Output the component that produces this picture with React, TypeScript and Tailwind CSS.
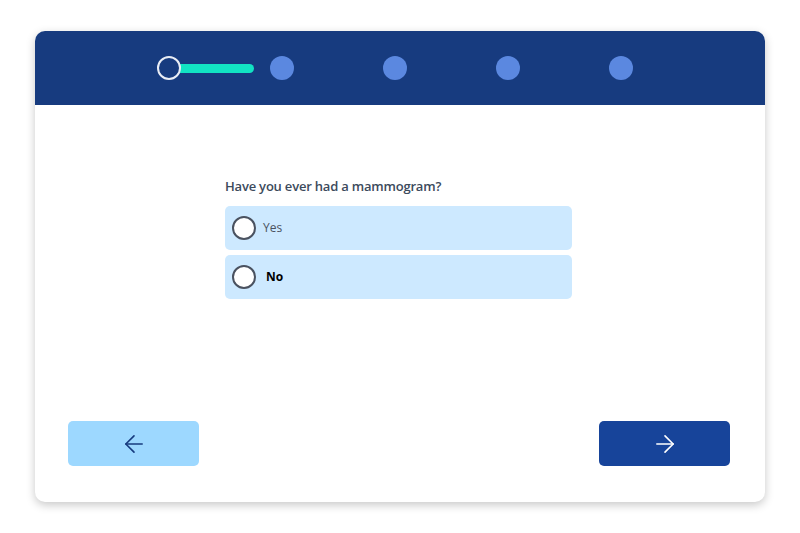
import { ArrowLeft, ArrowRight } from "lucide-react";

const steps = [0, 1, 2, 3, 4];

const options = [
  { id: "yes", label: "Yes", bold: false },
  { id: "no", label: "No", bold: true },
];

const App = () => {
  return (
    <div className="w-[800px] h-[533px] bg-white pt-[31px] pl-[35px]" style={{ fontFamily: '"Open Sans", "Noto Sans", sans-serif' }}>
      <div className="w-[730px] h-[471px] bg-white rounded-[10px] shadow-[0_3px_10px_rgba(0,0,0,0.22)] flex flex-col overflow-hidden">
        {/* progress header */}
        <div className="h-[74px] bg-[#173b7f] flex items-center pl-[122px] shrink-0">
          {steps.map((s) => (
            <div key={s} className="flex items-center">
              {s === 0 ? (
                <div className="w-6 h-6 rounded-full border-2 border-[#e8ecf5] bg-[#173b7f] relative z-10" />
              ) : (
                <div className="w-6 h-6 rounded-full bg-[#5b88e0]" />
              )}
              {s < steps.length - 1 && (
                <div className="w-[89px] flex items-center">
                  {s === 0 && <div className="h-[9px] w-[75px] -ml-[2px] rounded-r-full bg-[#12e3c3]" />}
                </div>
              )}
            </div>
          ))}
        </div>

        {/* question */}
        <div className="flex-1 flex flex-col pl-[190px] pt-[71px]">
          <div className="w-[347px]">
            <h2 className="text-[13px] font-semibold tracking-[-0.2px] text-[#3c4a5c] leading-5 mb-[10px]">Have you ever had a mammogram?</h2>
            <div className="flex flex-col gap-[5px]">
              {options.map((o) => (
                <label key={o.id} className="h-11 rounded-[5px] bg-[#cde9ff] flex items-center pl-[7px] gap-[7px] cursor-pointer">
                  <span className="w-6 h-6 rounded-full border-2 border-[#4a5260] bg-white shrink-0" />
                  <span className={o.bold ? "text-[12px] font-bold text-black ml-[3px]" : "text-[12px] text-[#4a5260]"}>{o.label}</span>
                </label>
              ))}
            </div>
          </div>
        </div>

        {/* nav buttons */}
        <div className="flex justify-between pl-[33px] pr-[35px] pb-[36px]">
          <button className="w-[131px] h-[45px] rounded-[5px] bg-[#9dd8ff] flex items-center justify-center">
            <ArrowLeft className="w-7 h-7 text-[#173b7f]" strokeWidth={1.4} />
          </button>
          <button className="w-[131px] h-[45px] rounded-[5px] bg-[#17449a] flex items-center justify-center">
            <ArrowRight className="w-7 h-7 text-white" strokeWidth={1.4} />
          </button>
        </div>
      </div>
    </div>
  );
};

export default App;
